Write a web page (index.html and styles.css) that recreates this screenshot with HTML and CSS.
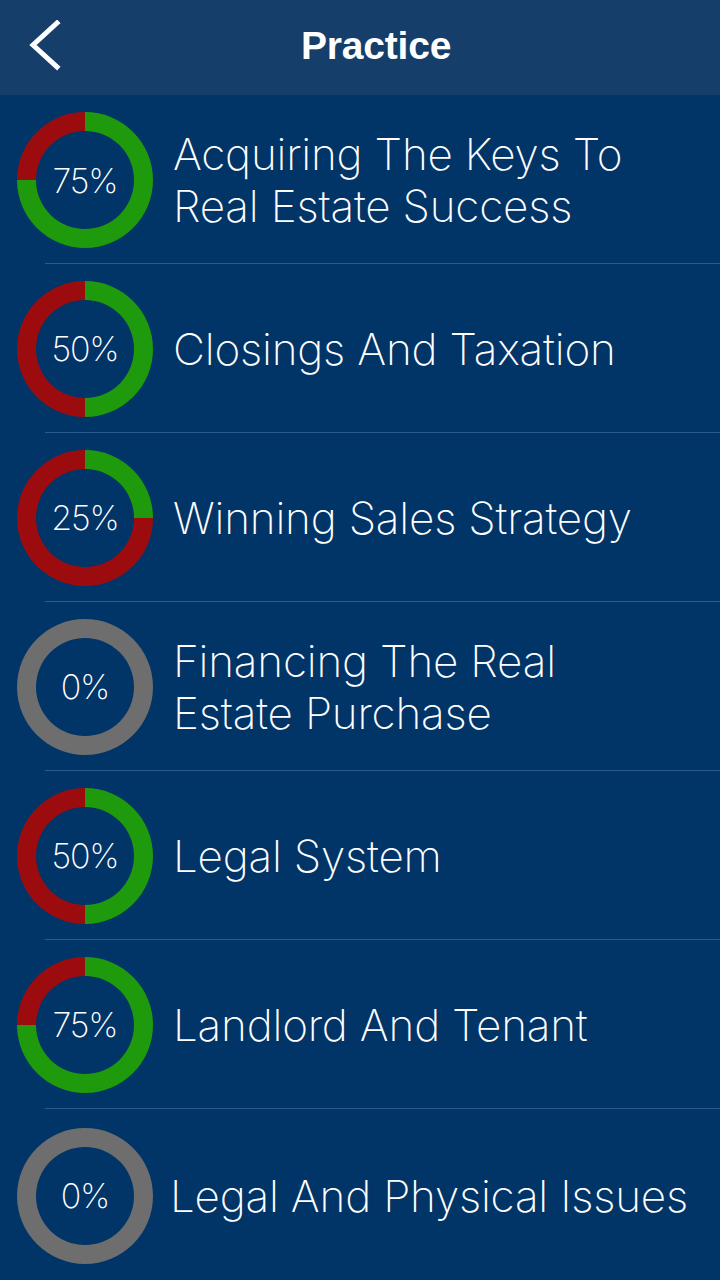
FILE: index.html
```html
<!DOCTYPE html>
<html lang="en">
<head>
<meta charset="utf-8">
<title>Practice</title>
<link rel="stylesheet" href="styles.css">
</head>
<body>
<header class="nav-bar">
  <button class="back-btn" aria-label="Back">
    <svg width="40" height="56" viewBox="0 0 40 56"><polyline points="29,3 5,25 29,47" fill="none" stroke="#fff" stroke-width="5" stroke-linecap="square"/></svg>
  </button>
  <h1 class="nav-title">Practice</h1>
</header>
<ul class="topic-list">
  <li class="topic">
    <div class="ring" style="--pct:75%"><span class="ring-label">75%</span></div>
    <span class="topic-name">Acquiring The Keys To Real Estate Success</span>
  </li>
  <li class="topic">
    <div class="ring" style="--pct:50%"><span class="ring-label">50%</span></div>
    <span class="topic-name">Closings And Taxation</span>
  </li>
  <li class="topic">
    <div class="ring" style="--pct:25%"><span class="ring-label">25%</span></div>
    <span class="topic-name">Winning Sales Strategy</span>
  </li>
  <li class="topic">
    <div class="ring ring-empty"><span class="ring-label">0%</span></div>
    <span class="topic-name">Financing The Real Estate Purchase</span>
  </li>
  <li class="topic">
    <div class="ring" style="--pct:50%"><span class="ring-label">50%</span></div>
    <span class="topic-name">Legal System</span>
  </li>
  <li class="topic">
    <div class="ring" style="--pct:75%"><span class="ring-label">75%</span></div>
    <span class="topic-name">Landlord And Tenant</span>
  </li>
  <li class="topic topic-last">
    <div class="ring ring-empty"><span class="ring-label">0%</span></div>
    <span class="topic-name">Legal And Physical Issues</span>
  </li>
</ul>
</body>
</html>
```

FILE: styles.css
```css
* { box-sizing: border-box; }

html, body {
  margin: 0;
  padding: 0;
  background: #013467;
  width: 720px;
  height: 1280px;
  overflow: hidden;
}

body {
  font-family: "Inter", "Liberation Sans", sans-serif;
  color: #fff;
}

/* top navigation bar */
.nav-bar {
  height: 96px;
  background: #153e6b;
  border-bottom: 1px solid #0d3262;
  display: flex;
  align-items: center;
}

.back-btn {
  background: none;
  border: 0;
  padding: 0;
  margin-left: 28px;
  width: 40px;
  height: 56px;
  display: flex;
}

.nav-title {
  margin: 0 0 0 233px;
  font-family: "Liberation Sans", Arial, sans-serif;
  font-weight: 700;
  font-size: 39px;
  letter-spacing: -0.2px;
  line-height: 1;
  padding-bottom: 4px;
}

/* list of topics */
.topic-list {
  list-style: none;
  margin: 0;
  padding: 0;
}

.topic {
  height: 169px;
  display: flex;
  align-items: center;
  gap: 20px;
  padding-left: 17px;
  position: relative;
}

.topic::after {
  content: "";
  position: absolute;
  left: 45px;
  right: 0;
  bottom: 0;
  height: 1px;
  background: #2c5a8d;
}

.topic:first-child { height: 168px; }
.topic-last { padding-top: 4px; }
.topic-last::after { display: none; }

/* progress ring: green share from 12 o'clock clockwise, rest red */
.ring {
  flex: none;
  position: relative;
  width: 136px;
  height: 136px;
  border-radius: 50%;
  background: conic-gradient(#1f9a0c 0 var(--pct), #9c0c0f var(--pct) 100%);
  display: flex;
  align-items: center;
  justify-content: center;
}

.ring::before {
  content: "";
  position: absolute;
  width: 98px;
  height: 98px;
  border-radius: 50%;
  background: #013467;
}

.ring-empty { background: #6e6e6e; }

.ring-label {
  position: relative;
  font-weight: 250;
  font-size: 34px;
  letter-spacing: -1.2px;
}

.topic-name {
  max-width: 490px;
  font-weight: 250;
  font-size: 44px;
  line-height: 52px;
  letter-spacing: -0.2px;
}

.topic-last .topic-name {
  max-width: none;
  margin-left: -3px;
  white-space: nowrap;
}
```
